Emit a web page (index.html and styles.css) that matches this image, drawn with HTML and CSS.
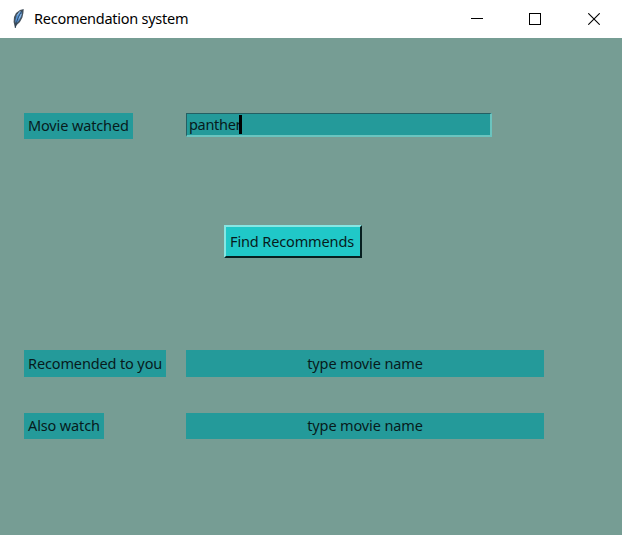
FILE: index.html
```html
<!DOCTYPE html>
<html lang="en">
<head>
<meta charset="utf-8">
<title>Recomendation system</title>
<link rel="stylesheet" href="styles.css">
</head>
<body>
<header class="titlebar">
  <svg class="feather" width="16" height="22" viewBox="0 0 16 22">
    <path d="M13.7 1 10 2 6 5 4 9 3.6 14 5 20 6.8 17 10 14 12.4 9.5 13.4 5Z" fill="#45525e"/>
    <path d="M12 3 9 4.5 6.5 8 5.3 13 6 15.5 8.7 13 11.2 8.5Z" fill="#5594d8"/>
    <path d="M12.2 2.5 8.6 8.5 6.2 15 5.3 20" fill="none" stroke="#24384a" stroke-width=".8"/>
    <path d="M10.3 3 7 7.5M11.3 6 9.2 10.5" stroke="#a8c8e6" stroke-width=".8"/>
  </svg>
  <h1 class="title">Recomendation system</h1>
  <div class="controls">
    <svg width="12" height="12" shape-rendering="crispEdges"><path d="M0 5.5h12" stroke="#000"/></svg>
    <svg width="12" height="12" shape-rendering="crispEdges"><rect x=".5" y=".5" width="11" height="11" fill="none" stroke="#000"/></svg>
    <svg width="12" height="12"><path d="M.3.3l11.4 11.4M11.7.3.3 11.7" stroke="#000" stroke-width="1.1"/></svg>
  </div>
</header>
<main class="window">
  <div class="row row-search">
    <div class="cell"><span class="label watched">Movie watched</span></div>
    <div class="entry"><span class="typed">panther</span><span class="caret"></span></div>
  </div>
  <button class="find">Find Recommends</button>
  <div class="row row-first">
    <div class="cell"><span class="label recommended">Recomended to you</span></div>
    <div class="result">type movie name</div>
  </div>
  <div class="row row-second">
    <div class="cell"><span class="label also">Also watch</span></div>
    <div class="result">type movie name</div>
  </div>
</main>
</body>
</html>
```
FILE: styles.css
```css
* { box-sizing: border-box; }
body {
  margin: 0;
  height: 535px;
  display: flex;
  flex-direction: column;
  overflow: hidden;
  background: #769d94;
  color: #071b1c;
  font: 14.5px/24px "Noto Sans", sans-serif;
  letter-spacing: -.13px;
  white-space: nowrap;
}
.titlebar {
  height: 38px;
  flex: none;
  display: flex;
  align-items: center;
  padding: 0 22px 0 10px;
  background: #fff;
  color: #000;
}
.feather { margin: -1px 8px 0 0; }
.title { margin: 0 0 2px; font-size: 14.5px; font-weight: 400; letter-spacing: -.26px; }
.controls { display: flex; gap: 46px; margin-left: auto; }
.controls svg { display: block; }
.controls svg:nth-child(-n+2) { margin-left: -1px; margin-right: 1px; }
.window { display: flex; flex-direction: column; padding: 75px 0 0 24px; }
.row { display: grid; grid-template-columns: 162px 358px; align-items: start; }
.cell { display: flex; }
.label { height: 26px; padding: 0 4px; background: #249a9a; }
.watched { width: 109px; }
.recommended { width: 142px; }
.also { width: 80px; }
.row-search { height: 26px; }
.entry {
  display: flex;
  width: 306px;
  height: 24px;
  padding-left: 2px;
  line-height: 20px;
  background: #249a9a;
  border: 1px solid #245f63;
  border-right: 2px solid #6ac4bf;
  border-bottom: 2px solid #6ac4bf;
}
.typed { width: 50px; letter-spacing: -.3px; }
.caret { width: 3px; height: 19px; margin-top: 1px; background: #000; position: relative; }
.find {
  width: 138px;
  height: 33px;
  margin: 86px 0 0 200px;
  padding: 0 2px 2px 0;
  font: inherit;
  letter-spacing: inherit;
  color: inherit;
  background: #20c8c8;
  border: 2px solid #071f20;
  border-top-color: #87e6e3;
  border-left-color: #87e6e3;
  border-radius: 0;
}
.row-first { margin-top: 92px; line-height: 26px; }
.row-second { margin-top: 36px; line-height: 25px; }
.result { height: 27px; text-align: center; background: #249a9a; }
.row-first .label { height: 27px; }
.row-second .result { height: 26px; }
```
